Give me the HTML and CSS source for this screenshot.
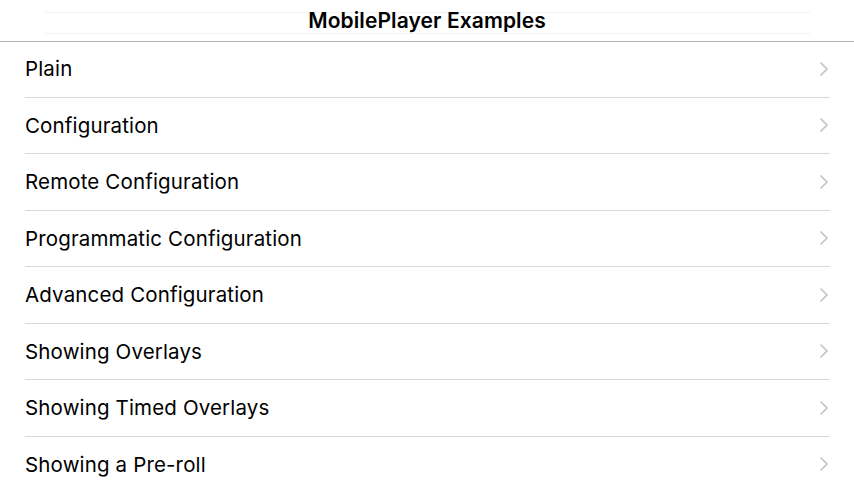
FILE: index.html
```
<!DOCTYPE html>
<html>
<head>
<meta charset="utf-8">
<link rel="stylesheet" href="styles.css">
</head>
<body>
<header class="navbar">
  <div class="ghost"></div>
  <h1 class="title">MobilePlayer Examples</h1>
</header>
<ul class="list">
  <li class="row"><span class="label">Plain</span><svg class="chev" viewBox="0 0 10 16"><path d="M1.5 1.5 L8 8 L1.5 14.5" /></svg></li>
  <li class="row"><span class="label">Configuration</span><svg class="chev" viewBox="0 0 10 16"><path d="M1.5 1.5 L8 8 L1.5 14.5" /></svg></li>
  <li class="row"><span class="label">Remote Configuration</span><svg class="chev" viewBox="0 0 10 16"><path d="M1.5 1.5 L8 8 L1.5 14.5" /></svg></li>
  <li class="row"><span class="label">Programmatic Configuration</span><svg class="chev" viewBox="0 0 10 16"><path d="M1.5 1.5 L8 8 L1.5 14.5" /></svg></li>
  <li class="row"><span class="label">Advanced Configuration</span><svg class="chev" viewBox="0 0 10 16"><path d="M1.5 1.5 L8 8 L1.5 14.5" /></svg></li>
  <li class="row"><span class="label">Showing Overlays</span><svg class="chev" viewBox="0 0 10 16"><path d="M1.5 1.5 L8 8 L1.5 14.5" /></svg></li>
  <li class="row"><span class="label">Showing Timed Overlays</span><svg class="chev" viewBox="0 0 10 16"><path d="M1.5 1.5 L8 8 L1.5 14.5" /></svg></li>
  <li class="row"><span class="label">Showing a Pre-roll</span><svg class="chev" viewBox="0 0 10 16"><path d="M1.5 1.5 L8 8 L1.5 14.5" /></svg></li>
</ul>
</body>
</html>
```
FILE: styles.css
```
html, body {
  margin: 0;
  padding: 0;
  background: #ffffff;
  width: 854px;
  height: 480px;
  overflow: hidden;
  font-family: Inter, "Liberation Sans", sans-serif;
  color: #000000;
}
.navbar {
  position: relative;
  height: 41px;
  border-bottom: 1px solid #b2b2b2;
  display: flex;
  align-items: center;
  justify-content: center;
  background: #ffffff;
}
.ghost {
  position: absolute;
  left: 45px;
  right: 44px;
  top: 12px;
  height: 20px;
  border-top: 1px solid #f2f2f2;
  border-bottom: 1px solid #f2f2f2;
}
.title {
  position: relative;
  margin: 0;
  font-size: 21px;
  font-weight: 600;
  letter-spacing: 0.1px;
}
.list {
  list-style: none;
  margin: -1px 0 0 0;
  padding: 0 0 0 25px;
}
.row {
  height: 55.5px;
  border-bottom: 1px solid #d8d8d8;
  margin-right: 24px;
  display: flex;
  align-items: center;
  justify-content: space-between;
}
.label {
  font-size: 20.5px;
  letter-spacing: 0.15px;
}
.chev {
  width: 10px;
  height: 16px;
  margin-right: 1px;
  fill: none;
  stroke: #c4c4c8;
  stroke-width: 1.7;
}
```
